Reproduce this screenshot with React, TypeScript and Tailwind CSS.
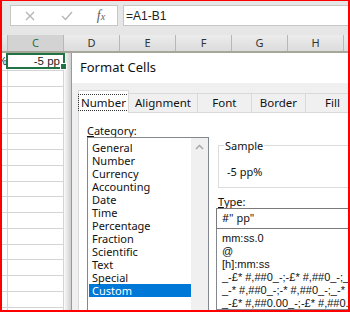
const ui = { fontFamily: '"Noto Sans", "Open Sans", sans-serif' }
const sans = { fontFamily: '"Liberation Sans", Arial, sans-serif' }

const columns = [
  { name: '', w: 'w-[6px]' },
  { name: 'C', w: 'w-[56px]', active: true },
  { name: 'D', w: 'w-[56px]' },
  { name: 'E', w: 'w-[56px]' },
  { name: 'F', w: 'w-[56px]' },
  { name: 'G', w: 'w-[56px]' },
  { name: 'H', w: 'w-[56px]' },
]

const rowHeights = [18, 16, 16, 16, 15, 16, 16, 16, 15, 16, 16, 16, 15, 16, 16, 16, 15]

const categories = [
  'General', 'Number', 'Currency', 'Accounting', 'Date', 'Time',
  'Percentage', 'Fraction', 'Scientific', 'Text', 'Special', 'Custom',
]

const formats = [
  'mm:ss.0',
  '@',
  '[h]:mm:ss',
  '_-£* #,##0_-;-£* #,##0_-;_-£* "-"_-;_-@_-',
  '_-* #,##0_-;-* #,##0_-;_-* "-"_-;_-@_-',
  '_-£* #,##0.00_-;-£* #,##0.00_-;_-£* "-"??_-;_-@_-',
]

const tabs = [
  { label: 'Alignment', w: 'w-[70px]' },
  { label: 'Font', w: 'w-[55px]' },
  { label: 'Border', w: 'w-[55px]' },
  { label: 'Fill', w: 'w-[55px]' },
]

export default function App() {
  return (
    <div className="w-[350px] h-[312px] overflow-hidden border-l-2 border-t border-r-2 border-b-2 border-[#ff0000] bg-white flex flex-col">
      {/* formula bar */}
      <div className="h-[34px] shrink-0 bg-[#e6e6e6] flex items-start pt-[4px]">
        <div className="ml-[8px] w-[108px] h-[21px] bg-white border border-[#c6c6c6] flex items-center">
          <div className="w-[37px] flex justify-center">
            <svg width="10" height="10" viewBox="0 0 10 10">
              <path d="M1 1 L9 9 M9 1 L1 9" stroke="#b4b4b4" strokeWidth="1.3" fill="none" />
            </svg>
          </div>
          <div className="w-[37px] flex justify-center">
            <svg width="12" height="10" viewBox="0 0 12 10">
              <path d="M1 5 L4.5 8.5 L11 1" stroke="#b4b4b4" strokeWidth="1.3" fill="none" />
            </svg>
          </div>
          <div className="flex-1 flex justify-center text-[#5e5e5e] italic text-[14px] leading-none" style={{ fontFamily: '"Liberation Serif", serif' }}>
            f<span className="text-[10px] mt-[3px]">x</span>
          </div>
        </div>
        <div className="ml-[5px] flex-1 h-[21px] bg-white border border-[#c6c6c6] border-r-0 flex items-center pl-[2px] text-[12px] text-[#222]" style={sans}>
          =A1-B1
        </div>
      </div>

      {/* column headers */}
      <div className="h-[18px] shrink-0 flex bg-linear-to-b from-[#ececec] to-[#dcdcdc] border-b-2 border-[#a5a598]" style={ui}>
        {columns.map((c, i) => (
          <div
            key={i}
            className={`${c.w} shrink-0 border-r border-[#b7b7b7] flex items-center justify-center text-[11px] ${c.active ? 'bg-[#d3d3d3] text-[#217346]' : 'text-[#333]'}`}
          >
            {c.name}
          </div>
        ))}
        <div className="flex-1" />
      </div>

      {/* body */}
      <div className="flex-1 flex min-h-0">
        {/* visible grid strip */}
        <div className="relative w-[62px] shrink-0 flex flex-col">
          {rowHeights.map((h, i) => (
            <div key={i} className="flex shrink-0 border-b border-[#d4d4d4]" style={{ height: h }}>
              <div className="w-[6px] border-r border-[#d4d4d4] overflow-hidden flex justify-end items-center text-[11px] text-[#222]" style={sans}>
                {i === 0 ? <span className="whitespace-nowrap">pp%</span> : null}
              </div>
              <div className="w-[56px] border-r border-[#d4d4d4] flex justify-end items-center pr-[3px] text-[11.5px] text-[#222]" style={sans}>
                {i === 0 ? '-5 pp' : null}
              </div>
            </div>
          ))}
          {/* selection */}
          <div className="absolute left-[4px] top-0 w-[59px] h-[16px] border-2 border-[#217346] z-10" />
          <div className="absolute left-[58px] top-[10px] w-[7px] h-[7px] bg-[#217346] border border-white z-20" />
        </div>

        {/* dialog shadow */}
        <div className="w-[7px] shrink-0 bg-linear-to-r from-[#fbfbfb] to-[#cfcfcf]" />

        {/* dialog */}
        <div className="flex-1 min-w-0 border-l border-[#a39c78] bg-[#f0f0f0] flex flex-col" style={ui}>
          <div className="h-[30px] shrink-0 bg-white flex items-center pl-[8px] text-[13px] text-[#111]">
            Format Cells
          </div>

          <div className="flex-1 flex flex-col pl-[6px] pt-[7px] min-h-0">
            {/* tabs */}
            <div className="relative z-10 flex items-end h-[22px] shrink-0">
              <div className="w-[61px] h-[23px] -mb-px bg-white border border-b-0 border-[#d9d9d9] flex items-center justify-center">
                <span className="px-[2px] text-[11.5px] leading-[15px] text-[#111] outline outline-1 outline-dotted outline-[#333]">
                  Number
                </span>
              </div>
              {tabs.map((t) => (
                <div
                  key={t.label}
                  className={`${t.w} shrink-0 -ml-px h-[19px] bg-[#f0f0f0] border border-b-0 border-[#d9d9d9] flex items-center justify-center text-[11.5px] text-[#111]`}
                >
                  {t.label}
                </div>
              ))}
            </div>

            {/* panel */}
            <div className="flex-1 bg-white border border-r-0 border-b-0 border-[#d9d9d9] flex pl-[8px] min-h-0 text-[#111]">
              {/* category */}
              <div className="w-[122px] shrink-0 flex flex-col pt-[11px]">
                <div className="h-[13px] leading-[13px] text-[11px]">
                  <span className="underline underline-offset-1">C</span>ategory:
                </div>
                <div className="flex-1 border border-b-0 border-[#828790] flex min-h-0">
                  <div className="flex-1 pt-[3px] pl-[1px]">
                    {categories.map((c) => (
                      <div
                        key={c}
                        className={`h-[13px] leading-[13px] text-[11px] pl-[3px] ${c === 'Custom' ? 'bg-[#0078d7] text-white' : ''}`}
                      >
                        {c}
                      </div>
                    ))}
                  </div>
                  <div className="w-[17px] bg-[#f0f0f0] flex justify-center pt-[6px]">
                    <svg width="9" height="6" viewBox="0 0 9 6">
                      <path d="M1 5 L4.5 1.5 L8 5" stroke="#a3a3a3" strokeWidth="1.4" fill="none" />
                    </svg>
                  </div>
                </div>
              </div>

              {/* right side */}
              <div className="flex-1 min-w-0 flex flex-col pl-[7px] pt-[26px]">
                <fieldset className="ml-[2px] border border-r-0 border-[#dcdcdc] pb-[9px]">
                  <legend className="ml-[5px] px-[1px] text-[11px] leading-[13px]">Sample</legend>
                  <div className="mt-[13px] pl-[8px] text-[11px] leading-[13px]">-5 pp%</div>
                </fieldset>
                <div className="ml-[2px] mt-[7px] h-[13px] leading-[13px] text-[11px]">
                  <span className="underline underline-offset-1">T</span>ype:
                </div>
                <div className="h-[21px] shrink-0 border border-r-0 border-[#7a7a7a] flex items-center pl-[5px] text-[11px] whitespace-nowrap">
                  #&quot; pp&quot;
                </div>
                <div className="flex-1 border border-t-0 border-r-0 border-[#828790] pt-[3px] pl-[5px] overflow-hidden" style={sans}>
                  {formats.map((f) => (
                    <div key={f} className="h-[13px] leading-[13px] text-[11px] whitespace-nowrap">
                      {f}
                    </div>
                  ))}
                </div>
              </div>
            </div>
          </div>
        </div>
      </div>
    </div>
  )
}
